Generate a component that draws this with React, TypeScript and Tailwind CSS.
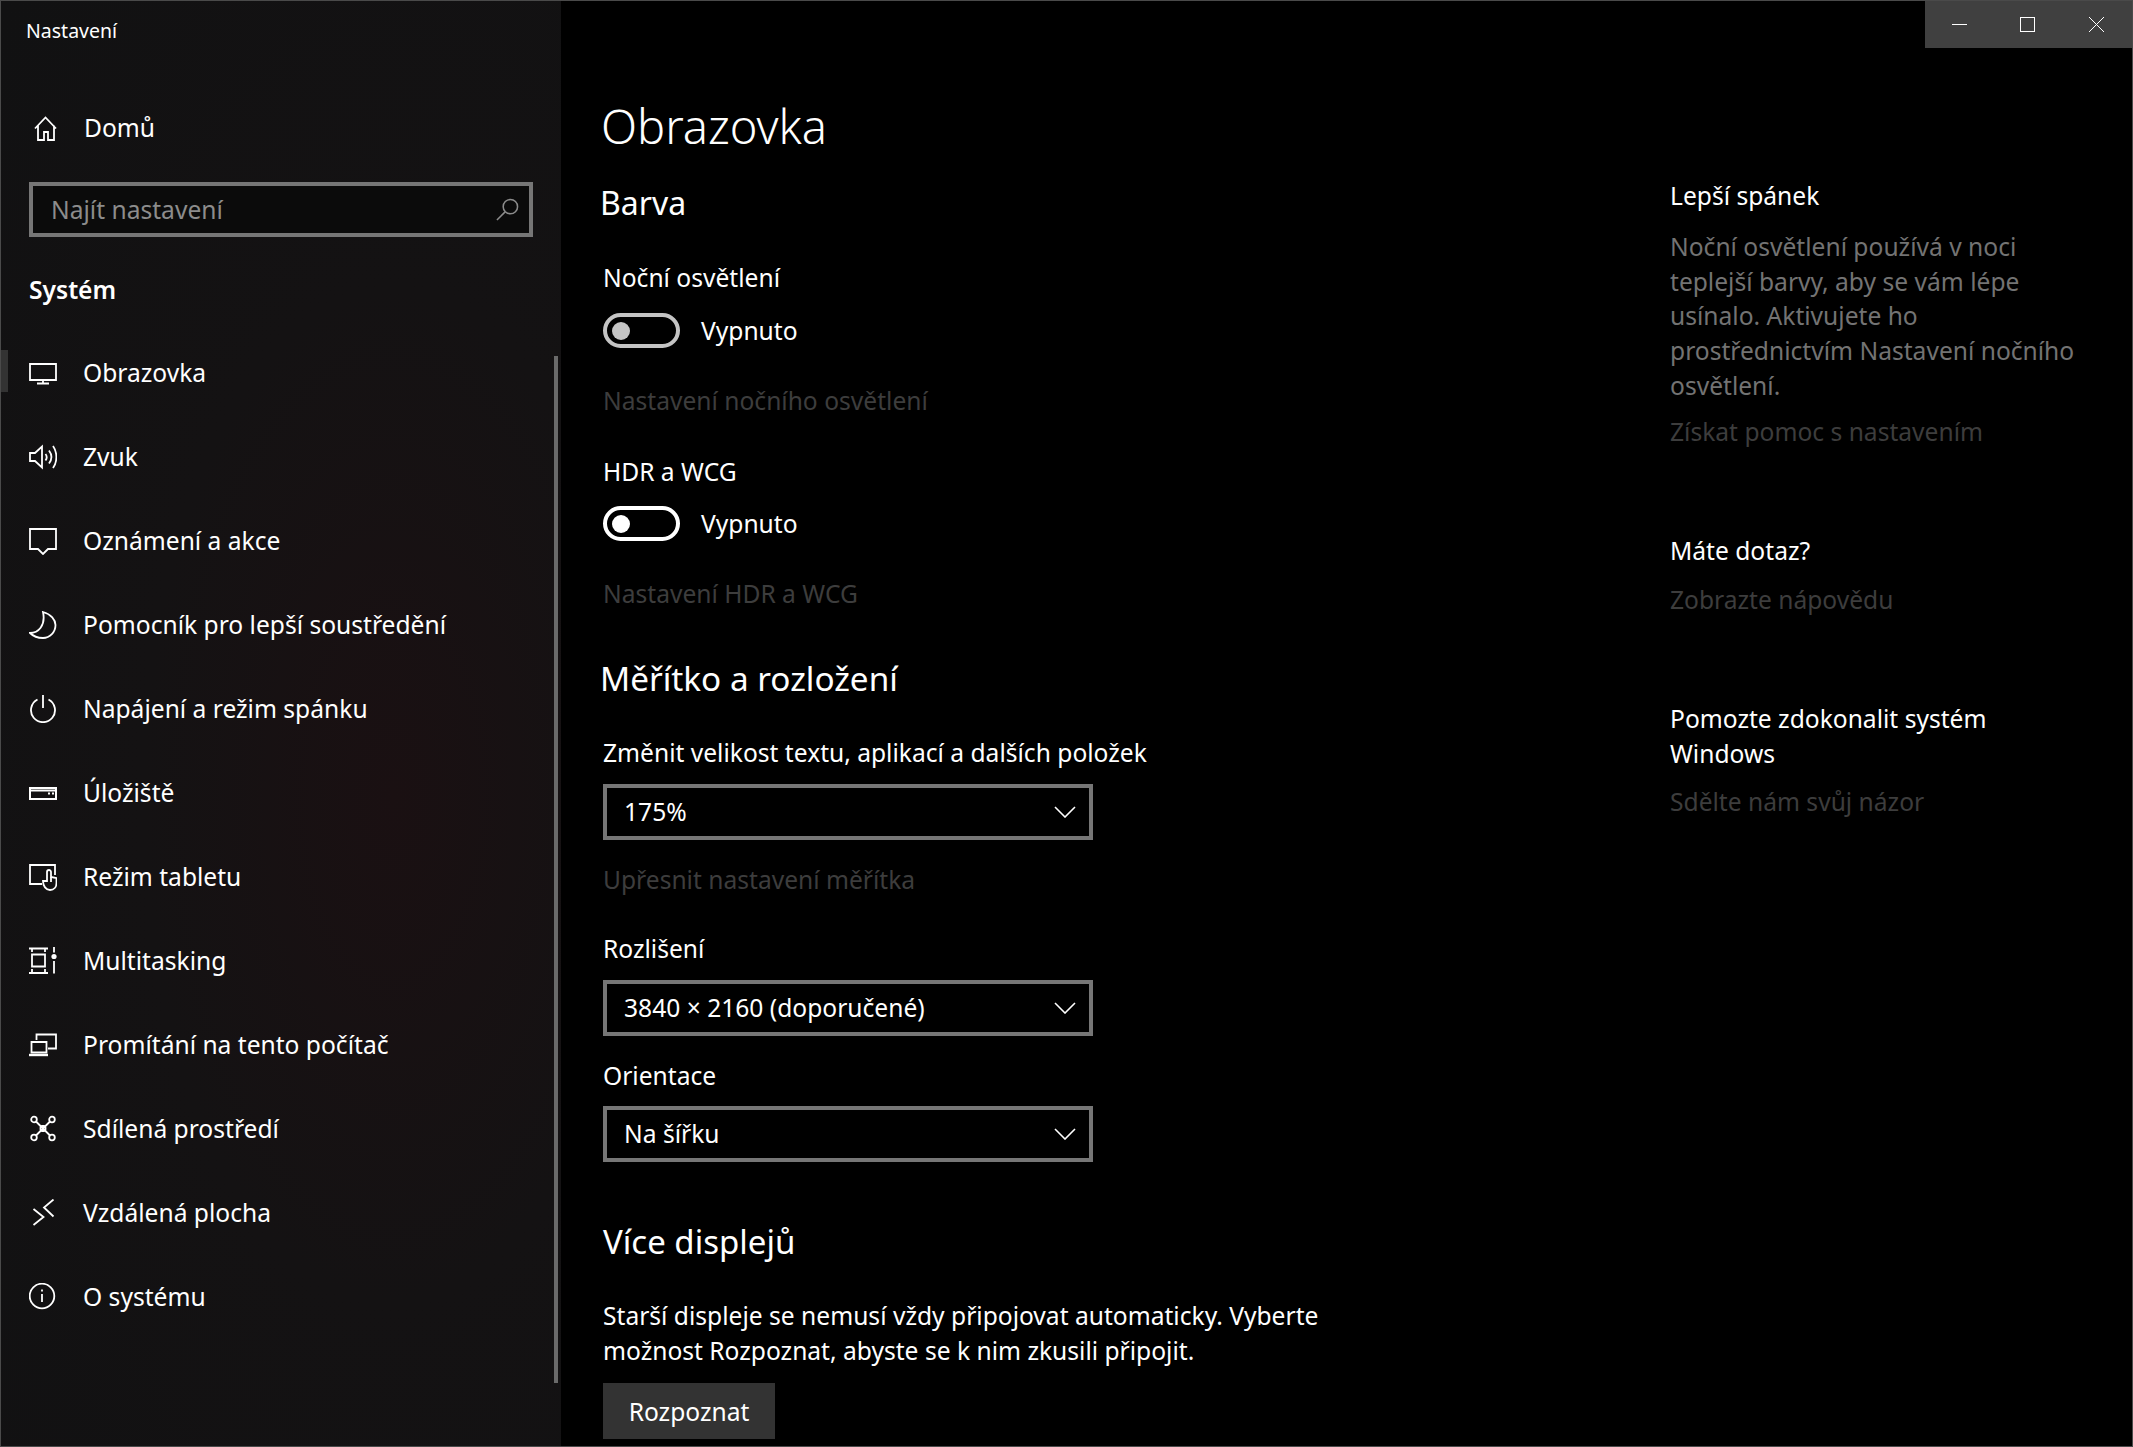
import React from 'react'

const Icon = ({ children }: { children: React.ReactNode }) => (
  <svg viewBox="0 0 28 28" className="w-[28px] h-[28px] shrink-0" fill="none" stroke="#fff" strokeWidth="1.8">
    {children}
  </svg>
)

const icons: Record<string, React.ReactNode> = {
  home: <path d="M4 14.500 14.500 3.500 25 14.500M7 11.500V26h6v-8h4v8h6V11.500" />,
  display: <path d="M1 5h26v16H1zM14 21v3M8 24.500h12" />,
  sound: (
    <>
      <path d="M1 10h5l7-6.500v21L6 18H1z" />
      <path d="M16.500 11c1.500 2 1.500 4.500 0 6.500M20 7.500c3 4 3 9 0 13M24 3c4.500 6.500 4.500 15.500 0 22" />
    </>
  ),
  notify: <path d="M1 2h26v20H19l-5 5-5-5H1z" />,
  moon: <path d="M14 1C22 3 26.500 9 26.500 14 26.500 21 21 27 14 27 9 27 4 25 1 22 9 22 17 15 14 1z" />,
  power: <path d="M14 0v13M8.500 4.500A12 12 0 1 0 19.500 4.500" />,
  storage: (
    <>
      <path d="M1 9h26v11H1z" strokeWidth="2" />
      <path d="M1 11.500h26M19 14.500h2M23 14.500h2" />
    </>
  ),
  tablet: (
    <>
      <path d="M13 21H1V2h25v10" />
      <path d="M14 18c0 5 3 9 7 9s6.500-3 6.500-7v-5l-5.500-1V9a2 2 0 0 0-4 0v9z" fill="#141213" />
      <path d="M22 14v5M18 18h-4" />
    </>
  ),
  multi: (
    <>
      <path d="M0 1.500h19M3 1.500V5M16 1.500V5M3 7.500h13v12H3zM3 22v4M16 22v4M0 26h19M25 0v5.500M25 14v12.500" />
      <circle cx="25" cy="9.500" r="2.600" fill="#fff" stroke="none" />
    </>
  ),
  project: (
    <>
      <path d="M7.500 9V3.500H27v14h-8" />
      <path d="M2.500 11h15v10.500h-15z" />
      <path d="M0 24h19" strokeWidth="2.400" />
    </>
  ),
  shared: (
    <>
      <circle cx="5" cy="4.500" r="2.800" />
      <circle cx="23" cy="4.500" r="2.800" />
      <circle cx="5" cy="22.500" r="2.800" />
      <circle cx="23" cy="22.500" r="2.800" />
      <path d="M7 6.500l14 14M21 6.500l-14 14" />
      <rect x="11.500" y="11" width="5" height="5" rx="1.500" />
    </>
  ),
  remote: <path d="M24.500 0.500 15 8.500l9.500 9M4.500 10l10 8-10 8" />,
  info: (
    <>
      <circle cx="13" cy="13" r="12.300" />
      <path d="M13 11v8M13 6.500v2" />
    </>
  ),
}

const nav: [string, string][] = [
  ['display', 'Obrazovka'],
  ['sound', 'Zvuk'],
  ['notify', 'Oznámení a akce'],
  ['moon', 'Pomocník pro lepší soustředění'],
  ['power', 'Napájení a režim spánku'],
  ['storage', 'Úložiště'],
  ['tablet', 'Režim tabletu'],
  ['multi', 'Multitasking'],
  ['project', 'Promítání na tento počítač'],
  ['shared', 'Sdílená prostředí'],
  ['remote', 'Vzdálená plocha'],
  ['info', 'O systému'],
]

const Toggle = ({ dim }: { dim?: boolean }) => (
  <div className="flex items-center h-[35px] gap-[21px]">
    <div
      className={`w-[77px] h-[35px] rounded-full border-[4px] flex items-center pl-[5px] ${dim ? 'border-[#c4c4c4]' : 'border-white'}`}
    >
      <div className={`w-[18px] h-[18px] rounded-full ${dim ? 'bg-[#c4c4c4]' : 'bg-white'}`}></div>
    </div>
    <span className="pt-[2px]">Vypnuto</span>
  </div>
)

const Select = ({ value, className }: { value: string; className: string }) => (
  <div className={`w-[490px] h-[56px] border-[4px] border-[#767676] flex items-center justify-between pl-[17px] pr-[13px] ${className}`}>
    <span>{value}</span>
    <svg viewBox="0 0 22 12" className="w-[22px] h-[12px]" fill="none" stroke="#fff" strokeWidth="1.6">
      <path d="M1 1l10 10L21 1" />
    </svg>
  </div>
)

const Row = ({ className = '', children }: { className?: string; children: React.ReactNode }) => (
  <div className={`h-[36px] leading-[36px] whitespace-nowrap ${className}`}>{children}</div>
)

export default function App() {
  return (
    <div className="w-[2133px] h-[1447px] relative overflow-hidden flex bg-black text-white text-[24.6px] border border-[#4a4a4a] font-['Noto_Sans',sans-serif]">
      <aside className="relative w-[560px] h-full shrink-0 bg-[radial-gradient(ellipse_at_70%_55%,#1a1012_0%,#141213_45%,#111112_100%)]">
        <div className="h-[59px] pl-[25px] flex items-center text-[19.5px]">Nastavení</div>
        <div className="mt-[26px] h-[84px] flex items-center pl-[30px] gap-[25px]">
          <Icon>{icons.home}</Icon>
          <span>Domů</span>
        </div>
        <div className="mt-[12px] mx-[28px] w-[504px] h-[55px] border-[4px] border-[#767676] bg-[#0b0b0b] flex items-center justify-between pl-[18px] pr-[10px] text-[#8c8c8c]">
          <span className="pt-[2px]">Najít nastavení</span>
          <svg viewBox="0 0 24 24" className="w-[23px] h-[23px]" fill="none" stroke="#8c8c8c" strokeWidth="1.6">
            <circle cx="15" cy="9" r="7.500" />
            <path d="M9.500 14.500 1 23" />
          </svg>
        </div>
        <Row className="mt-[35px] pl-[28px] font-semibold">Systém</Row>
        <nav className="mt-[23px]">
          {nav.map(([icon, label]) => (
            <div key={label} className="h-[84px] flex items-center pl-[28px] gap-[26px]">
              <Icon>{icons[icon]}</Icon>
              <span>{label}</span>
            </div>
          ))}
        </nav>
        <div className="absolute left-0 top-[349px] w-[7px] h-[42px] bg-[#333]"></div>
        <div className="absolute left-[553px] top-[355px] w-[4px] h-[1027px] bg-[#6a6a6a]"></div>
      </aside>

      <main className="pl-[42px] pt-[95px] w-[1109px] shrink-0">
        <h1 className="-ml-[2px] h-[60px] leading-[60px] text-[47px] font-light">Obrazovka</h1>
        <h2 className="-ml-[3px] mt-[25px] h-[44px] leading-[44px] text-[32px]">Barva</h2>
        <Row className="mt-[35px]">Noční osvětlení</Row>
        <div className="mt-[17px]"><Toggle dim /></div>
        <Row className="mt-[35px] text-[#3d3d3d]">Nastavení nočního osvětlení</Row>
        <Row className="mt-[35px]">HDR a WCG</Row>
        <div className="mt-[16px]"><Toggle /></div>
        <Row className="mt-[35px] text-[#3d3d3d]">Nastavení HDR a WCG</Row>
        <h2 className="-ml-[3px] mt-[44px] h-[44px] leading-[44px] text-[33.300px]">Měřítko a rozložení</h2>
        <Row className="mt-[35px]">Změnit velikost textu, aplikací a dalších položek</Row>
        <Select value="175%" className="mt-[13px]" />
        <Row className="mt-[22px] text-[#3d3d3d]">Upřesnit nastavení měřítka</Row>
        <Row className="mt-[33px]">Rozlišení</Row>
        <Select value="3840 × 2160 (doporučené)" className="mt-[13px]" />
        <Row className="mt-[22px]">Orientace</Row>
        <Select value="Na šířku" className="mt-[12px]" />
        <h2 className="mt-[58px] h-[44px] leading-[44px] text-[33px]">Více displejů</h2>
        <p className="mt-[34px] w-[760px] leading-[35px]">
          Starší displeje se nemusí vždy připojovat automaticky. Vyberte možnost Rozpoznat, abyste se k nim zkusili připojit.
        </p>
        <div className="mt-[15px] w-[172px] h-[56px] bg-[#333] flex items-center justify-center pt-[2px]">Rozpoznat</div>
      </main>

      <section className="pt-[177px] w-[440px] shrink-0">
        <Row>Lepší spánek</Row>
        <p className="mt-[16px] w-[420px] leading-[34.700px] text-[#737373]">
          Noční osvětlení používá v noci teplejší barvy, aby se vám lépe usínalo. Aktivujete ho prostřednictvím Nastavení nočního osvětlení.
        </p>
        <Row className="mt-[10px] text-[#3d3d3d]">Získat pomoc s nastavením</Row>
        <Row className="mt-[83px]">Máte dotaz?</Row>
        <Row className="mt-[13px] text-[#3d3d3d]">Zobrazte nápovědu</Row>
        <p className="mt-[83px] leading-[35px] w-[400px]">Pomozte zdokonalit systém Windows</p>
        <Row className="mt-[13px] text-[#3d3d3d]">Sdělte nám svůj názor</Row>
      </section>

      <div className="absolute right-0 top-0 w-[207px] h-[47px] bg-[#404040] flex">
        <div className="w-[68px] flex items-center justify-center">
          <div className="w-[15px] h-px bg-white"></div>
        </div>
        <div className="w-[69px] flex items-center justify-center">
          <div className="w-[15px] h-[15px] border border-white"></div>
        </div>
        <div className="w-[70px] flex items-center justify-center pr-[2px]">
          <svg viewBox="0 0 15 15" className="w-[15px] h-[15px]" stroke="#fff" strokeWidth="1">
            <path d="M0 0l15 15M15 0 0 15" />
          </svg>
        </div>
      </div>
    </div>
  )
}
